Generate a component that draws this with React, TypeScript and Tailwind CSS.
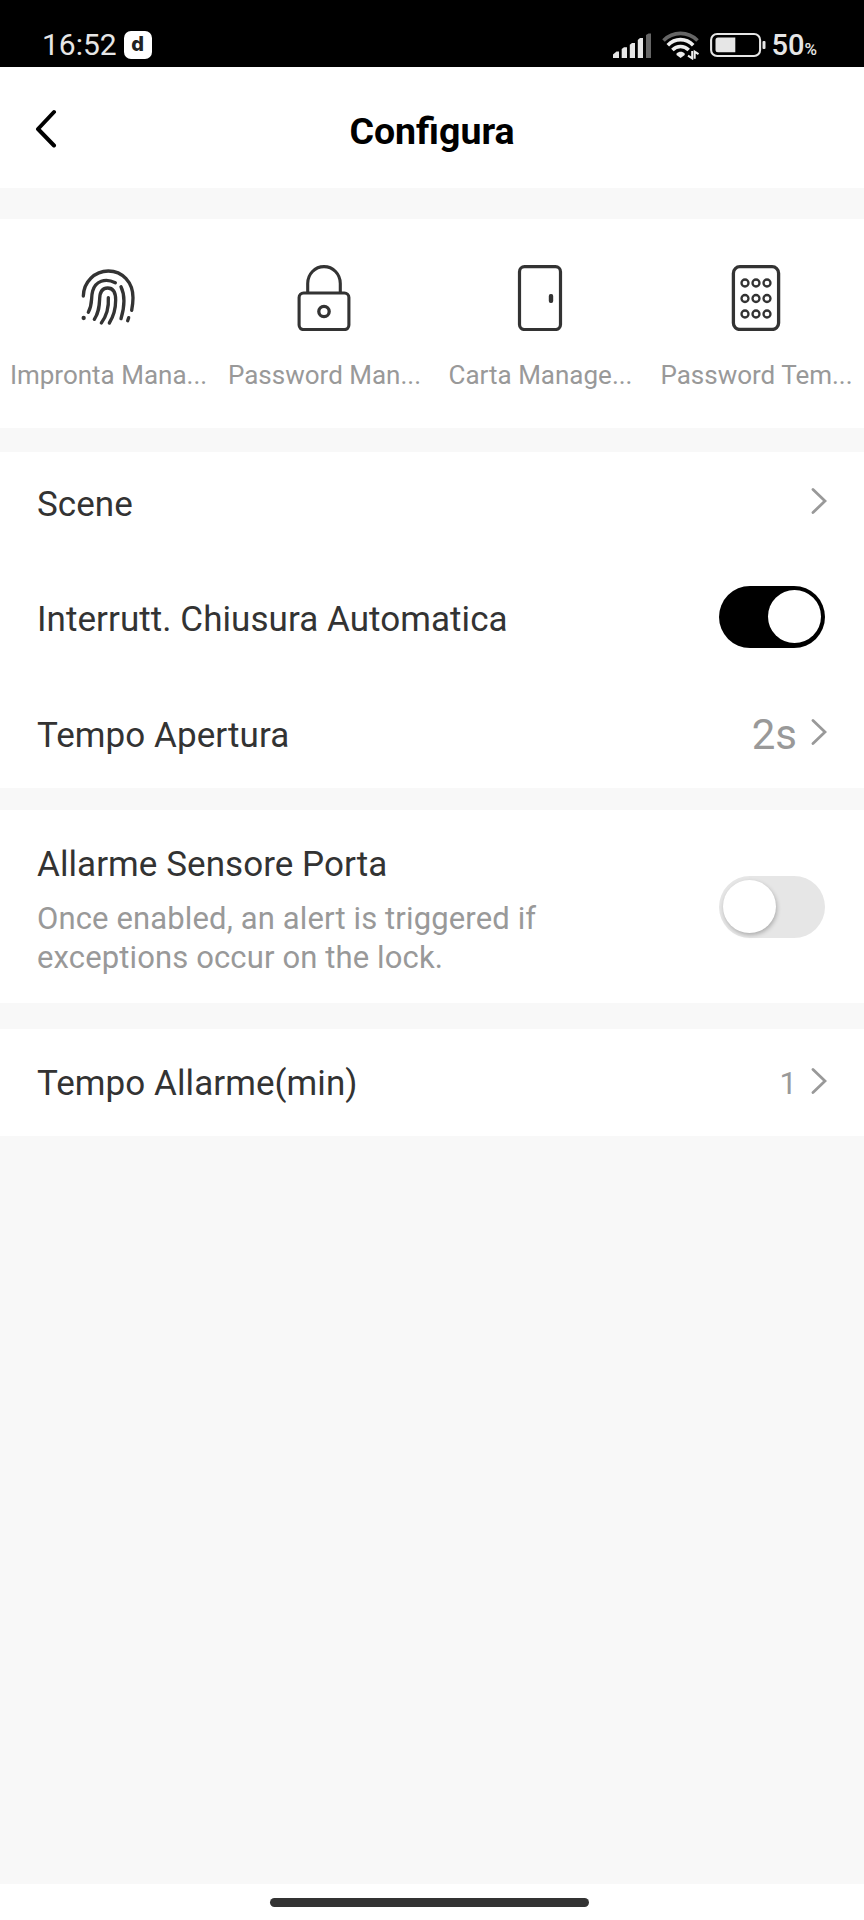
import { useState, type ReactNode } from "react";

const TOOLS = [
  { label: "Impronta Mana...", icon: <FingerprintIcon /> },
  { label: "Password Man...", icon: <LockIcon /> },
  { label: "Carta Manage...", icon: <DoorIcon /> },
  { label: "Password Tem...", icon: <KeypadIcon /> },
];

function FingerprintIcon() {
  return (
    <svg width="66" height="66" viewBox="45 45 198 198" fill="none" stroke="#333" strokeWidth="10" strokeLinecap="round">
      <path d="M70 138C71 96 104 63 145 63C188 63 219 98 219 143C219 158 217 170 215 181" />
      <path d="M85 187C99 160 92 144 98 123C106 93 136 83 166 98" />
      <path d="M103 208C118 185 118 165 119 145C120 121 131 114 143 114C159 114 167 128 167 150C167 175 160 200 148 219" />
      <path d="M145 143C147 174 138 200 124 219" />
      <path d="M183 110C194 133 195 166 183 206" />
      <path d="M206 203L203 212" />
      <circle cx="71" cy="204" r="6.5" fill="#333" stroke="none" />
    </svg>
  );
}

function LockIcon() {
  return (
    <svg width="66" height="66" viewBox="0 0 66 66" fill="none" stroke="#333" strokeWidth="3.1">
      <path d="M16.7 28V18.5C16.7 9 24 1.6 33 1.6S49.3 9 49.3 18.5V28" />
      <rect x="8.1" y="28" width="49.8" height="36.6" rx="4.5" />
      <circle cx="33" cy="46.5" r="5.2" strokeWidth="3.3" />
    </svg>
  );
}

function DoorIcon() {
  return (
    <svg width="66" height="66" viewBox="0 0 66 66" fill="none" stroke="#333" strokeWidth="3.2">
      <rect x="12.5" y="1.7" width="41" height="62.8" rx="5" />
      <rect x="41.8" y="29" width="4.4" height="9" rx="1.9" fill="#333" stroke="none" />
    </svg>
  );
}

function KeypadIcon() {
  return (
    <svg width="66" height="66" viewBox="0 0 66 66" fill="none" stroke="#333" strokeWidth="3.3">
      <rect x="10.4" y="1.7" width="45.2" height="62.8" rx="6.5" />
      {[18, 33.5, 49].map((cy) =>
        [22, 33, 44].map((cx) => <circle key={`${cx}-${cy}`} cx={cx} cy={cy} r="3.5" strokeWidth="2.3" />)
      )}
    </svg>
  );
}

function Chevron() {
  return (
    <svg width="16" height="28" viewBox="0 0 16 28" fill="none" stroke="#999" strokeWidth="2.8" strokeLinecap="round">
      <path d="M2 2.5L14 14L2 25.5" />
    </svg>
  );
}

function SignalIcon() {
  return (
    <svg width="38" height="27" viewBox="0 0 38 27" fill="#e6e6e6">
      <path d="M0 26V22.5L3.5 19.5H6V26Z" />
      <path d="M8.7 26V17L11 15.3H14V26Z" />
      <path d="M16.8 26V12.7L19 11H22V26Z" />
      <path d="M24.8 26V8L27 6H30V26Z" />
      <path d="M33 26V3L35.5 1.5H38V26Z" fill="#666" />
    </svg>
  );
}

function WifiIcon() {
  return (
    <svg width="38" height="30" viewBox="0 0 38 30" fill="none" stroke="#eee" strokeWidth="3.6">
      <path d="M1.5 10.5C11 1 26 1 35.5 10.5" stroke="#666" />
      <path d="M5.8 15.2C13 7.8 24 7.8 31.2 15.2" />
      <path d="M10.4 20C15 15.4 22 15.4 26.7 20" />
      <path d="M14.5 23.5C17 21 20.5 21 22.7 23.5V25L18.6 28L14.5 25Z" fill="#eee" stroke="none" />
      <path d="M30.2 21V28.4L26 25.6M32.7 28.8V21.6L36.5 24.2" stroke="#eee" strokeWidth="2" />
    </svg>
  );
}

function BatteryIcon() {
  return (
    <svg width="56" height="26" viewBox="0 0 56 26" fill="none">
      <rect x="1.1" y="2" width="49" height="22" rx="6" stroke="#e6e6e6" strokeWidth="2.1" />
      <path d="M8 5.6H25.3V20.3H8A2.5 2.5 0 0 1 5.5 17.8V8.1A2.5 2.5 0 0 1 8 5.6Z" fill="#e6e6e6" />
      <rect x="52.5" y="9" width="3" height="8" rx="1" fill="#e6e6e6" />
    </svg>
  );
}

function Toggle({ on, onChange }: { on: boolean; onChange: () => void }) {
  return (
    <button
      type="button"
      role="switch"
      aria-checked={on}
      onClick={onChange}
      className={[
        "mr-0.5 flex h-[62px] w-[106px] shrink-0 items-center rounded-full px-1",
        on ? "justify-end bg-black" : "justify-start bg-[#e6e6e6]",
      ].join(" ")}
    >
      <span className={["size-[53px] rounded-full bg-white", on ? "" : "shadow-[1px_2px_4px_rgba(0,0,0,0.25)]"].join(" ")} />
    </button>
  );
}

function Row({ label, children }: { label: string; children: ReactNode }) {
  return (
    <li className="flex h-[98px] items-center justify-between px-[37px]">
      <span className="pt-[7px] text-[35px] leading-10 tracking-[0.06px]">{label}</span>
      <div className="flex items-center">{children}</div>
    </li>
  );
}

export default function App() {
  const [autoLock, setAutoLock] = useState(true);
  const [alarm, setAlarm] = useState(false);

  return (
    <div className="flex h-[1920px] w-[864px] flex-col bg-[#f8f8f8] font-[Roboto,sans-serif] text-[#333]">
      <div className="flex h-[67px] shrink-0 items-end justify-between bg-black pr-[47px] pb-[7px] pl-[42px] text-[#e6e6e6]">
        <div className="flex items-center gap-[7px]">
          <span className="text-[30px] leading-[30px]">16:52</span>
          <span className="flex size-7 items-center justify-center rounded-[7px] bg-white pb-0.5 font-[Inter,sans-serif] text-[20px] font-extrabold text-[#222]">
            d
          </span>
        </div>
        <div className="flex items-center">
          <SignalIcon />
          <div className="ml-[11px] flex">
            <WifiIcon />
          </div>
          <div className="ml-[10px] flex">
            <BatteryIcon />
          </div>
          <div className="ml-[6px] flex items-baseline">
            <span className="text-[29px] leading-[30px] font-medium">50</span>
            <span className="text-[17px] leading-4 font-medium">%</span>
          </div>
        </div>
      </div>

      <header className="grid h-[121px] shrink-0 grid-cols-[100px_1fr_100px] items-center bg-white">
        <button type="button" className="pl-[34px]">
          <svg width="24" height="40" viewBox="0 0 24 40" fill="none" stroke="#000" strokeWidth="4" strokeLinecap="round" strokeLinejoin="round">
            <path d="M20 4L4 21L20 37.5" />
          </svg>
        </button>
        <h1 className="pt-1.5 text-center text-[37.5px] leading-10 font-bold text-black">Configura</h1>
      </header>

      <section className="mt-[31px] grid h-[209px] shrink-0 grid-cols-4 bg-white pt-[46px]">
        {TOOLS.map((t) => (
          <button key={t.label} type="button" className="flex flex-col items-center">
            {t.icon}
            <span className="mt-7 pl-px text-[26px] leading-[32px] whitespace-nowrap text-[#999]">{t.label}</span>
          </button>
        ))}
      </section>

      <ul className="mt-6 flex h-[336px] shrink-0 flex-col gap-[17.5px] bg-white">
        <Row label="Scene">
          <Chevron />
        </Row>
        <Row label="Interrutt. Chiusura Automatica">
          <Toggle on={autoLock} onChange={() => setAutoLock(!autoLock)} />
        </Row>
        <Row label="Tempo Apertura">
          <span className="mr-[14px] pt-[5px] text-[42px] leading-[48px] text-[#999]">2s</span>
          <Chevron />
        </Row>
      </ul>

      <section className="mt-[22px] flex h-[193px] shrink-0 items-center justify-between bg-white px-[37px]">
        <div className="w-[560px] pt-[9px]">
          <h2 className="text-[35px] leading-10 tracking-[0.06px]">Allarme Sensore Porta</h2>
          <p className="mt-[15px] text-[31px] leading-[38.5px] tracking-[0.13px] text-[#999]">
            Once enabled, an alert is triggered if
            <br />
            exceptions occur on the lock.
          </p>
        </div>
        <Toggle on={alarm} onChange={() => setAlarm(!alarm)} />
      </section>

      <ul className="mt-[26px] h-[107px] shrink-0 bg-white pt-[2.5px]">
        <Row label="Tempo Allarme(min)">
          <span className="mr-[14px] pt-1.5 text-[31px] leading-9 text-[#999]">1</span>
          <Chevron />
        </Row>
      </ul>

      <div className="mt-auto flex h-9 shrink-0 justify-center bg-white pt-[14px] pr-[5px]">
        <div className="h-[9px] w-[319px] rounded-full bg-[#333]" />
      </div>
    </div>
  );
}
